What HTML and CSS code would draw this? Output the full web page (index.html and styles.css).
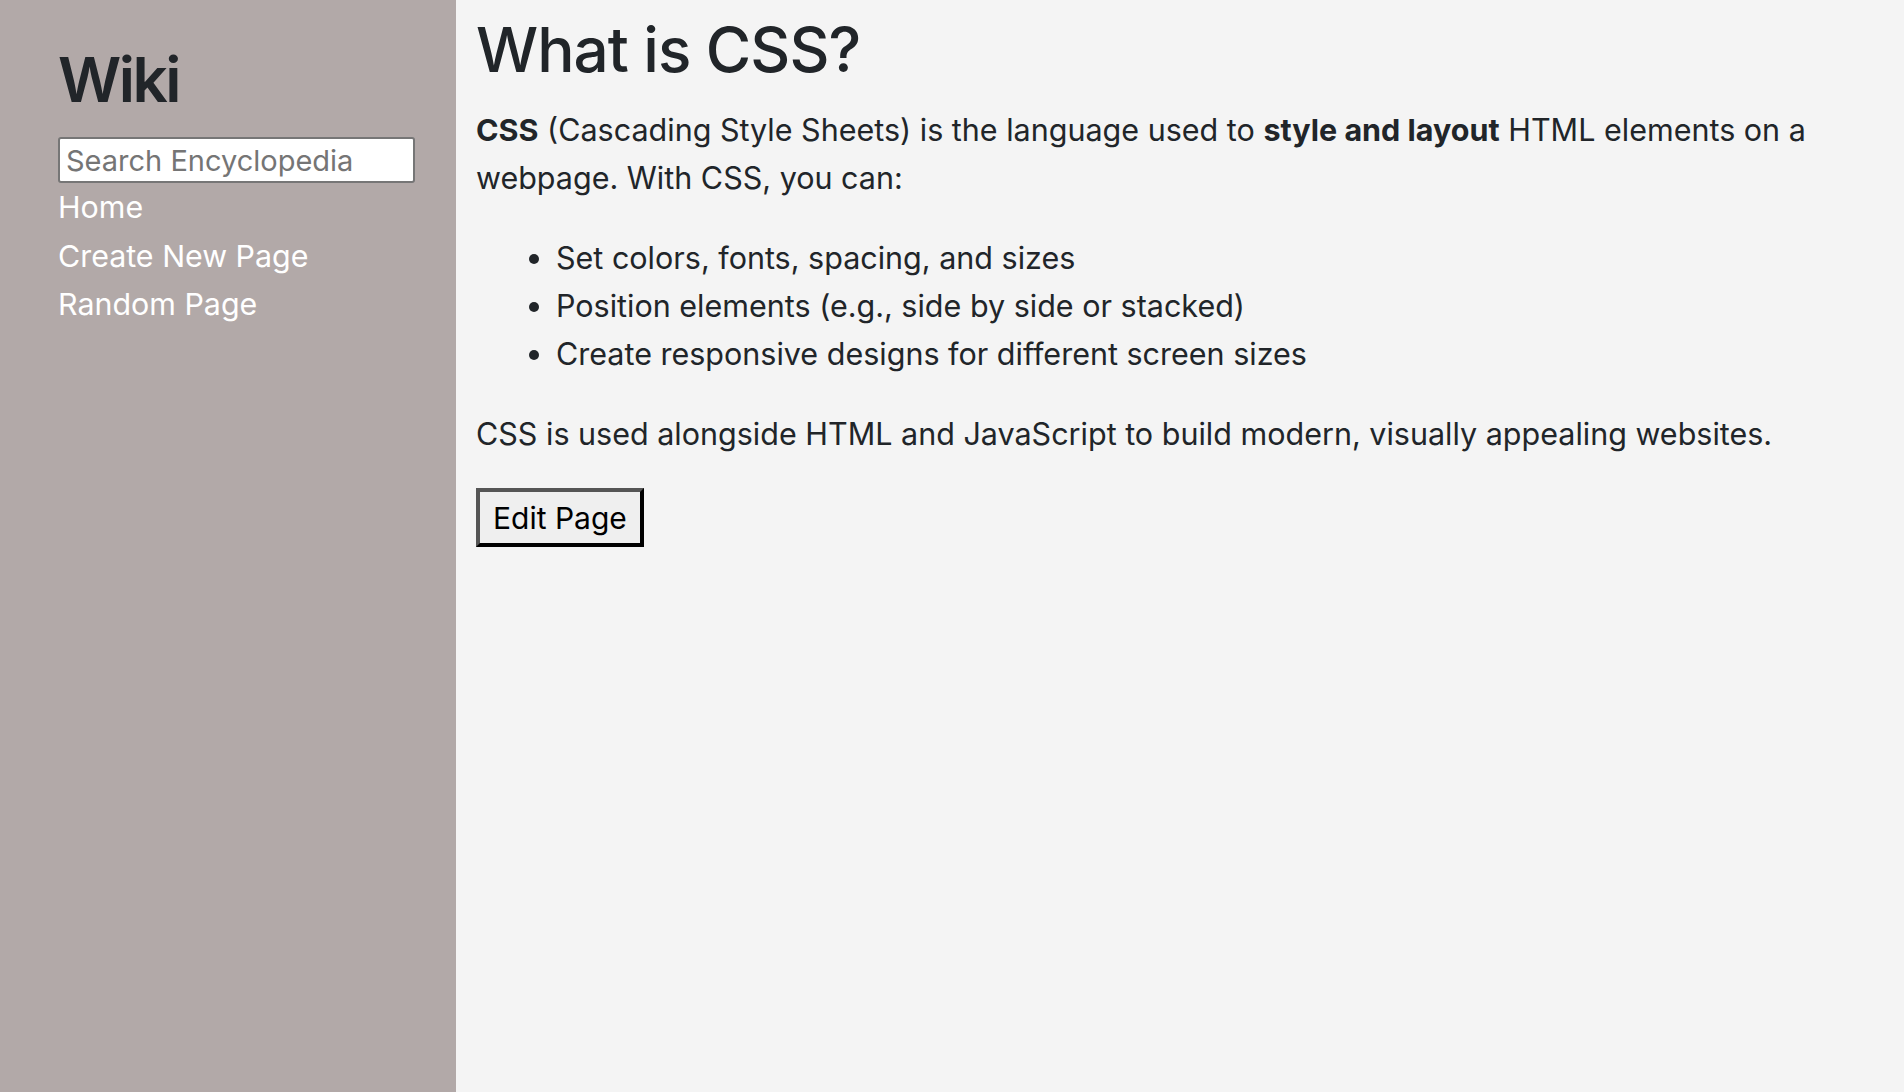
FILE: index.html
```html
<!DOCTYPE html>
<html lang="en">
<head>
<meta charset="utf-8">
<title>CSS</title>
<link rel="stylesheet" href="styles.css">
</head>
<body>
<div class="layout">
  <aside class="sidebar">
    <h2 class="brand">Wiki</h2>
    <form class="search">
      <input class="search-input" type="text" name="q" placeholder="Search Encyclopedia">
    </form>
    <nav class="nav">
      <a href="#" class="nav-link">Home</a>
      <a href="#" class="nav-link">Create New Page</a>
      <a href="#" class="nav-link">Random Page</a>
    </nav>
  </aside>
  <main class="main">
    <h1 class="title">What is CSS?</h1>
    <p class="para"><strong>CSS</strong> (Cascading Style Sheets) is the language used to <strong>style and layout</strong> HTML elements on a webpage. With CSS, you can:</p>
    <ul class="list">
      <li>Set colors, fonts, spacing, and sizes</li>
      <li>Position elements (e.g., side by side or stacked)</li>
      <li>Create responsive designs for different screen sizes</li>
    </ul>
    <p class="para">CSS is used alongside HTML and JavaScript to build modern, visually appealing websites.</p>
    <button class="edit-btn" type="button">Edit Page</button>
  </main>
</div>
</body>
</html>
```
FILE: styles.css
```css
html, body {
  margin: 0;
  padding: 0;
  height: 100%;
}
body {
  font-family: Inter, "Noto Sans", sans-serif;
  font-size: 30.5px;
  line-height: 48px;
  color: #212529;
  background: #f4f4f4;
}
.layout {
  display: flex;
  min-height: 100vh;
}
.sidebar {
  width: 456px;
  flex: 0 0 456px;
  box-sizing: border-box;
  background: #b2a9a8;
  padding: 43px 20px 20px 58px;
}
.brand {
  margin: 0 0 20px;
  font-size: 62px;
  line-height: 1.2;
  font-weight: 600;
  letter-spacing: -2.5px;
  color: #212529;
}
.search {
  margin: 0;
}
.search-input {
  display: block;
  box-sizing: border-box;
  width: 357px;
  height: 46px;
  margin: 0;
  padding: 0 6px;
  border: 2px solid #767676;
  border-radius: 3px;
  background: #fff;
  font-family: inherit;
  font-size: 29px;
  color: #212529;
}
.search-input::placeholder {
  color: #757575;
}
.nav {
  display: flex;
  flex-direction: column;
  align-items: flex-start;
}
.nav-link {
  color: #fff;
  text-decoration: none;
  font-size: 30.4px;
  line-height: 48.5px;
}
.main {
  flex: 1;
  padding: 13px 20px 20px 20px;
}
.title {
  margin: 0 0 19px;
  font-size: 62px;
  line-height: 1.2;
  font-weight: 500;
  letter-spacing: -1px;
}
.para {
  margin: 0 0 32px;
}
.list {
  margin: 0 0 32px;
  padding-left: 80px;
}
.edit-btn {
  box-sizing: border-box;
  height: 59px;
  margin-top: -2px;
  padding: 0 13px;
  border-style: solid;
  border-width: 4px;
  border-color: #555 #000 #000 #555;
  background: #efefef;
  color: #000;
  font-family: inherit;
  font-size: 30px;
  line-height: 1;
}
```
